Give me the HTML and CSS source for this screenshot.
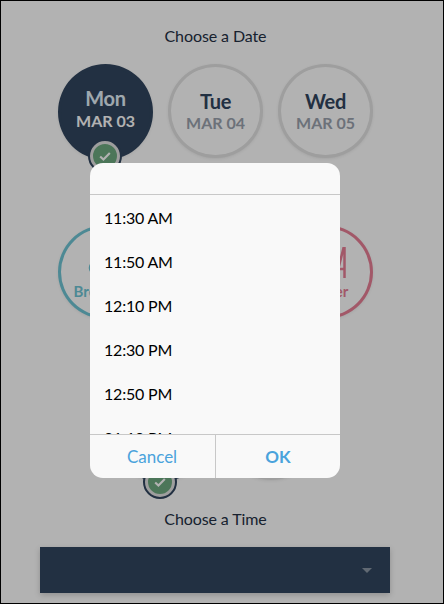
FILE: index.html
```html
<!DOCTYPE html>
<html lang="en">
<head>
<meta charset="utf-8">
<title>Choose a Date</title>
<link rel="stylesheet" href="styles.css">
</head>
<body>
<main class="page">
  <h2 class="heading">Choose a Date</h2>
  <div class="row">
    <div class="circle circle-on">
      <span class="big">Mon</span><span class="small">MAR 03</span>
      <span class="badge"><svg viewBox="0 0 16 16" class="tick"><path d="M2.5 8.500 6.200 12 13.500 4.500"/></svg></span>
    </div>
    <div class="circle"><span class="big">Tue</span><span class="small">MAR 04</span></div>
    <div class="circle"><span class="big">Wed</span><span class="small">MAR 05</span></div>
  </div>
  <div class="row row-meals">
    <div class="circle circle-teal">
      <svg class="meal" viewBox="0 0 40 33"><ellipse cx="20" cy="21" rx="16" ry="9"/></svg>
      <span class="label">Breakfast</span>
    </div>
    <div class="circle"><span class="label">Lunch</span></div>
    <div class="circle circle-rose">
      <svg class="meal" viewBox="0 0 40 33"><path d="M30 31 37.500 1 38.500 1 38.500 31M33 22H38"/></svg>
      <span class="label">Dinner</span>
    </div>
  </div>
  <div class="row row-last">
    <div class="circle circle-on">
      <span class="big">AM</span>
      <span class="badge badge-low"><svg viewBox="0 0 16 16" class="tick"><path d="M2.5 8.500 6.200 12 13.500 4.500"/></svg></span>
    </div>
    <div class="circle"><span class="big">PM</span></div>
  </div>
  <h2 class="heading heading-time">Choose a Time</h2>
  <div class="select"><span class="caret"></span></div>
</main>
<div class="scrim"></div>
<section class="dialog">
  <div class="dialog-head"></div>
  <ul class="times">
    <li>11:30 AM</li>
    <li>11:50 AM</li>
    <li>12:10 PM</li>
    <li>12:30 PM</li>
    <li>12:50 PM</li>
    <li>01:10 PM</li>
  </ul>
  <div class="actions">
    <button class="action action-cancel">Cancel</button>
    <button class="action action-ok">OK</button>
  </div>
</section>
</body>
</html>
```
FILE: styles.css
```css
* { box-sizing: border-box; }
html, body { margin: 0; height: 100%; }
body {
  position: relative;
  width: 444px;
  height: 604px;
  overflow: hidden;
  background: #fff;
  border: 1px solid #000;
  font-family: Lato, "Liberation Sans", sans-serif;
}
.page {
  display: flex;
  flex-direction: column;
  align-items: center;
  width: 429px;
  padding-top: 25px;
}
.heading {
  margin: 0;
  font-size: 16px;
  font-weight: 400;
  line-height: 20px;
  letter-spacing: -.1px;
  color: #243044;
}
.heading-time { margin-top: 27px; }
.row {
  display: flex;
  justify-content: center;
  gap: 15px;
  margin-top: 18px;
  width: 100%;
}
.row-meals { margin-top: 65px; }
.row-last { margin-top: 67px; }
.circle {
  position: relative;
  display: flex;
  flex-direction: column;
  align-items: center;
  justify-content: center;
  width: 95px;
  height: 94px;
  border: 3px solid #e2e2e2;
  border-radius: 50%;
  color: #31465f;
  background: #fff;
  box-shadow: 0 1px 3px rgba(0,0,0,.08);
}
.circle-on {
  height: 96px;
  border-color: #31465f;
  background: #31465f;
  color: #fff;
}
.circle-teal { border-color: #6fc5d5; color: #6fc5d5; }
.circle-rose { border-color: #e87f96; color: #e87f96; }
.big { font-size: 20px; font-weight: 700; line-height: 24px; letter-spacing: -.3px; }
.small { font-size: 16px; font-weight: 700; line-height: 20px; color: #9ba3ae; }
.circle-on .big { color: #e4f1fa; margin-top: -7px; }
.circle-on .small { color: #fff; margin-top: 1px; }
.label { font-size: 15px; font-weight: 700; line-height: 18px; margin-top: 2px; }
.meal {
  flex: none;
  width: 40px;
  height: 33px;
  margin-top: 3px;
  fill: none;
  stroke: currentColor;
  stroke-width: 2.5;
}
.badge {
  position: absolute;
  left: 28px;
  top: 73px;
  display: flex;
  align-items: center;
  justify-content: center;
  width: 32px;
  height: 32px;
  border-radius: 50%;
  background: #6eaa80;
  border: 4px solid #e2e2e2;
  outline: 2px solid #31465f;
  outline-offset: -1px;
}
.badge-low { top: 77px; }
.tick {
  width: 14px;
  height: 14px;
  fill: none;
  stroke: #fff;
  stroke-width: 2.4;
}
.select {
  display: flex;
  align-items: center;
  justify-content: flex-end;
  width: 350px;
  height: 46px;
  margin: 18px 1px 0 0;
  padding-right: 18px;
  background: #31465f;
  box-shadow: 0 2px 6px rgba(0,0,0,.2);
}
.caret {
  width: 0;
  height: 0;
  border-left: 5px solid transparent;
  border-right: 5px solid transparent;
  border-top: 5px solid #8c97a5;
  margin-top: 1px;
}
.scrim {
  position: absolute;
  inset: 0;
  background: rgba(0,0,0,.3);
}
.dialog {
  position: absolute;
  left: 89px;
  top: 162px;
  display: flex;
  flex-direction: column;
  width: 250px;
  height: 315px;
  overflow: hidden;
  border-radius: 13px;
  background: #f9f9f9;
}
.dialog-head {
  flex: none;
  height: 32px;
  border-bottom: 1px solid #c8c8c8;
}
.times {
  flex: 1;
  min-height: 0;
  overflow: hidden;
  margin: 0;
  padding: 0;
  list-style: none;
}
.times li {
  height: 44px;
  padding-left: 14px;
  font-size: 16px;
  line-height: 46px;
  letter-spacing: -.2px;
  color: #000;
}
.actions {
  flex: none;
  display: flex;
  height: 44px;
  border-top: 1px solid #c8c8c8;
}
.action {
  flex: 1;
  padding: 0;
  border: 0;
  background: none;
  font: 400 17px Lato, "Liberation Sans", sans-serif;
  color: #4aa3dc;
}
.action-cancel { border-right: 1px solid #c8c8c8; padding-right: 1px; }
.action-ok { font-weight: 700; }
```
